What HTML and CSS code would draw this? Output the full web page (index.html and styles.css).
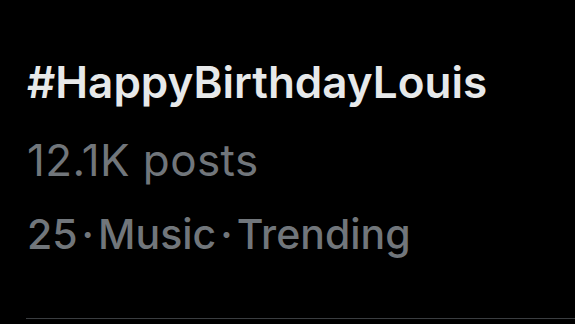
FILE: index.html
```html
<!DOCTYPE html>
<html>
<head>
<meta charset="utf-8">
<link rel="stylesheet" href="styles.css">
</head>
<body>
<div class="trend">
  <div class="tag">#HappyBirthdayLouis</div>
  <div class="count">12.1K posts</div>
  <div class="meta">25<span class="dot">·</span>Music<span class="dot">·</span>Trending</div>
</div>
</body>
</html>
```
FILE: styles.css
```css
html, body {
  margin: 0;
  background: #000;
  width: 575px;
  height: 324px;
  overflow: hidden;
}
.trend {
  padding: 51px 0 0 1px;
  margin-left: 26px;
  font-family: Inter, "Noto Sans", sans-serif;
  border-bottom: 1px solid #3a3d40;
  height: 267px;
}
.tag {
  color: #e7e9ea;
  font-size: 44px;
  font-weight: 600;
  line-height: 62px;
}
.count {
  color: #71767b;
  font-size: 44px;
  font-weight: 400;
  letter-spacing: 0.4px;
  line-height: 76px;
  margin-top: 9px;
}
.meta {
  color: #71767b;
  font-size: 41px;
  font-weight: 500;
  line-height: 72px;
}
.dot {
  margin: 0 4px;
}
```
